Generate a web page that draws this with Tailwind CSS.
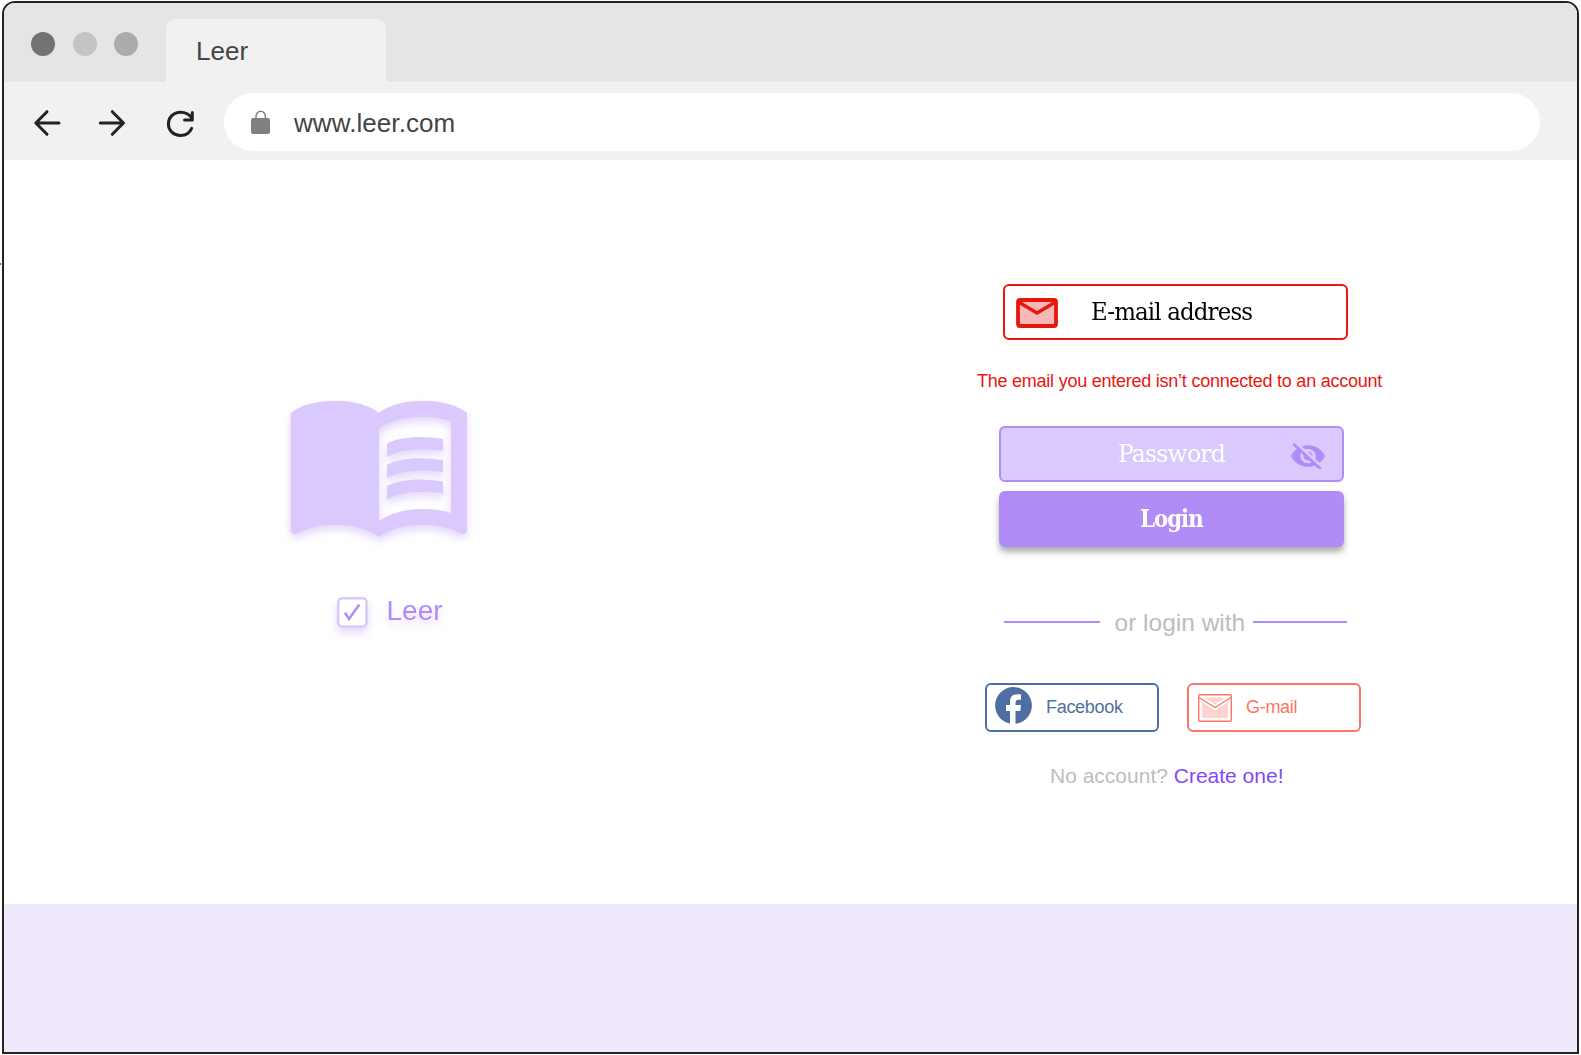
<!DOCTYPE html>
<html lang="en">
<head>
<meta charset="utf-8">
<title>Leer</title>
<script src="https://cdn.jsdelivr.net/npm/@tailwindcss/browser@4"></script>
</head>
<body class="relative h-[1055px] w-[1581px] overflow-hidden bg-white pt-px pl-0.5 font-['Liberation_Sans',sans-serif]">
<span class="absolute top-[263px] left-0 h-[2px] w-[1px] bg-[#52616b]"></span>
<div class="flex h-[1052.5px] w-[1577px] flex-col overflow-hidden rounded-t-[13px] border-2 border-[#222222] bg-white">
  <header class="flex h-[79px] shrink-0 items-end bg-[#e5e5e5]">
    <div class="flex w-[162px] gap-[17.5px] self-start pt-[28.5px] pl-[27px]">
      <span class="size-6 rounded-full bg-[#737373]"></span>
      <span class="size-6 rounded-full bg-[#c4c4c4]"></span>
      <span class="size-6 rounded-full bg-[#ababab]"></span>
    </div>
    <div class="h-[63px] w-[220px] rounded-t-[10px] bg-[#f1f1f1] pl-[30px] text-[26px] leading-[64px] text-[#444444]">Leer</div>
    <svg class="size-1" viewBox="0 0 4 4"><path d="M0 0Q0 4 4 4H0Z" fill="#f1f1f1"/></svg>
  </header>
  <nav class="flex h-[78px] shrink-0 items-start bg-[#f1f1f1] pt-[11px]">
    <svg class="h-[58px] w-[220px]" viewBox="4 93 220 58" fill="none" stroke="#222" stroke-width="3" stroke-linecap="round" stroke-linejoin="round">
      <path d="M59 123H36M47 111.700L35.800 123L47 134.300"/>
      <path d="M100.300 123H123M112.300 111.700L123.500 123L112.300 134.300"/>
      <path d="M192.200 118.300C189.500 114.500 185.500 112.200 180.500 112.200C173.500 112.200 168.400 117.500 168.400 123.900S173.500 135.500 180.500 135.500C185.800 135.500 190 132.500 191.700 128.300M192.300 112.500V120H184.500"/>
    </svg>
    <div class="flex h-[58px] w-[1316px] items-center rounded-full bg-white pl-[27px]">
      <svg class="h-6 w-[19px]" viewBox="0 0 19 24"><path d="M5 10V6.500A4.700 5.200 0 0 1 14.400 6.500V10" fill="none" stroke="#808080" stroke-width="1.500"/><rect y="8" width="19" height="16" rx="2" fill="#808080"/></svg>
      <span class="mt-0.5 ml-6 text-[26px] leading-[30px] tracking-[0.08px] text-[#444444]">www.leer.com</span>
    </div>
  </nav>
  <main class="flex h-[744px] shrink-0">
    <section class="w-[966px] pt-[230px] pl-[276px] text-[#b18cf7]">
      <svg class="h-[160px] w-[200px] drop-shadow-[0_5px_4px_rgba(177,140,247,0.35)]" viewBox="280 390 200 160" fill="#d9c9fc">
        <path fill-rule="evenodd" d="M290.700 412.700C302 404.500 318 400.700 335 400.700C353 400.700 368 404.500 379 413C390 404.500 405 400.700 423 400.700C440 400.700 456 404.500 467 412.700V530C467 533.500 463.500 535 460 533C449 527.500 437 524.800 423 524.800C406 524.800 391 528.500 379 537C367 528.500 352 524.800 335 524.800C321 524.800 309 527.500 298 533C294.500 535 290.700 533.500 290.700 530ZM379 428.500C391 420.500 406 416.800 423 416.800C433 416.800 443 418.500 451 421V513C443 510.500 433 509 423 509C406 509 391 513 379 521Z"/>
        <path d="M387 443.500C400 437 420 435 443 439V451C420 447 400 450 387 456.800Z"/>
        <path d="M387 464.800C400 458.300 420 456.300 443 460.300V472.300C420 468.300 400 471.300 387 478.100Z"/>
        <path d="M387 486.100C400 479.600 420 477.600 443 481.600V493.600C420 489.600 400 492.600 387 499.400Z"/>
      </svg>
      <div class="mt-[43px] ml-[56px] flex items-center drop-shadow-[0_5px_4px_rgba(177,140,247,0.35)]">
        <svg class="mt-[3px] size-[33px]" viewBox="0 0 33 33" fill="none"><rect x="2.300" y="2.300" width="28.200" height="28.200" rx="4" fill="white" stroke="#d9c9fc" stroke-width="2.500"/><path d="M9 16.800L13 23L23.300 8.500" stroke="#b18cf7" stroke-width="2.500"/></svg>
        <span class="ml-[17.500px] text-[28px] leading-8">Leer</span>
      </div>
    </section>
    <section class="w-[420px] pt-[124px]">
      <div class="ml-[33px] flex h-[56px] w-[344.5px] items-center rounded-md border-2 border-[#e8170e]">
        <svg class="mt-0.5 ml-[11px] h-[30px] w-[42px]" viewBox="0 0 42 30"><rect x="2" y="2" width="38" height="26" rx="2" fill="#f8b8b7" stroke="#e8170e" stroke-width="3.800"/><path d="M2.500 4L21 15L39.500 4" fill="none" stroke="#e8170e" stroke-width="3.300"/></svg>
        <span class="ml-[33px] origin-left scale-x-[1.06] font-['DejaVu_Serif_Condensed','DejaVu_Serif',serif] text-[24px] leading-8 tracking-[-0.8px] whitespace-nowrap text-black">E-mail address</span>
      </div>
      <p class="mt-[27px] ml-[7px] text-[18px] leading-7 tracking-[-0.24px] whitespace-nowrap text-[#e8170e]">The email you entered isn’t connected to an account</p>
      <div class="mt-[31px] ml-[29px] flex h-[56px] w-[344.5px] items-center rounded-md border-2 border-[#b18cf7] bg-[#d9c9fc]">
        <span class="ml-[116.500px] w-[108.5px] origin-left scale-x-[1.095] font-['DejaVu_Serif_Condensed','DejaVu_Serif',serif] text-[24px] leading-8 tracking-[-0.8px] whitespace-nowrap text-white">Password</span>
        <svg class="mt-1 ml-[65px] h-[26px] w-[34px]" viewBox="1 3 22 18" preserveAspectRatio="none" fill="#b18cf7"><path d="M12 7c2.760 0 5 2.240 5 5 0 .650-.130 1.260-.360 1.830l2.920 2.920c1.510-1.260 2.700-2.890 3.430-4.750-1.730-4.390-6-7.500-11-7.500-1.400 0-2.740.250-3.980.700l2.160 2.160C10.740 7.130 11.350 7 12 7zM2 4.270l2.280 2.280.460.460C3.080 8.300 1.780 10.020 1 12c1.730 4.390 6 7.500 11 7.500 1.550 0 3.030-.300 4.380-.840l.420.420L19.730 22 21 20.730 3.270 3 2 4.270zM7.530 9.800l1.550 1.550c-.050.210-.080.430-.080.650 0 1.660 1.340 3 3 3 .220 0 .440-.030.650-.080l1.550 1.550c-.670.330-1.410.530-2.200.530-2.760 0-5-2.240-5-5 0-.790.200-1.530.530-2.200zm4.310-.780l3.150 3.150.020-.160c0-1.660-1.340-3-3-3l-.170.010z"/></svg>
      </div>
      <div class="mt-[9px] ml-[29px] flex h-[56px] w-[344.5px] items-center rounded-md bg-[#b18cf7] shadow-[0_5px_6px_rgba(0,0,0,0.32)]">
        <span class="ml-[140.500px] origin-left scale-x-[0.985] font-['DejaVu_Serif_Condensed','DejaVu_Serif',serif] text-[24px] leading-8 font-bold tracking-[-1px] text-white">Login</span>
      </div>
      <div class="mt-[60px] ml-[34px] flex h-[30px] items-center text-[24.500px] text-[#bdbdbd]">
        <span class="h-[2px] w-[96px] bg-[#b18cf7]"></span>
        <span class="mt-0.5 ml-[14.5px] w-[131px] leading-[30px] whitespace-nowrap">or login with</span>
        <span class="ml-[7.500px] h-[2px] w-[94px] bg-[#b18cf7]"></span>
      </div>
      <div class="mt-[46px] ml-[15px] flex gap-[28.5px] text-[18px]">
        <div class="flex h-[49px] w-[173.5px] items-center rounded-md border-2 border-[#4e6fa2] text-[#4e6fa2]">
          <svg class="mb-[5px] ml-[8px] size-[37px]" viewBox="0 0 37 37"><circle cx="18.500" cy="18.500" r="18.400" fill="#4e6fa2"/><path d="M15 37V24H11V18H15V15C15 10 17.500 7.300 22 7.300H26V12.800H23.500Q20.500 12.800 20.500 15.500V18H26L25.300 24H20.500V37Z" fill="white"/></svg>
          <span class="mb-0.5 ml-[14px] leading-6 tracking-[-0.3px]">Facebook</span>
        </div>
        <div class="flex h-[49px] w-[173.5px] items-center rounded-md border-2 border-[#fd7569] text-[#fd7569]">
          <svg class="mt-px ml-[9px] h-[28px] w-[34px]" viewBox="0 0 34 28"><rect x=".7" y=".7" width="32.600" height="26.600" rx="1" fill="white" stroke="#fd7569" stroke-width="1.400"/><path d="M4 8L17 16.500L30 8V24H4ZM7 3.500H27L17 10.500Z" fill="#ffd3cf"/><path d="M1 3.500L17 13.500L33 3.500" fill="none" stroke="#fd7569" stroke-width="1.300"/></svg>
          <span class="mb-0.5 ml-[14px] leading-6 tracking-[-0.3px]">G-mail</span>
        </div>
      </div>
      <p class="mt-[30px] ml-[80px] text-[21px] leading-7 whitespace-nowrap text-[#bdbdbd]">No account? <a class="text-[#8348fa]">Create one!</a></p>
    </section>
  </main>
  <footer class="flex-1 bg-[#f0e9fb]"></footer>
</div>
</body>
</html>
